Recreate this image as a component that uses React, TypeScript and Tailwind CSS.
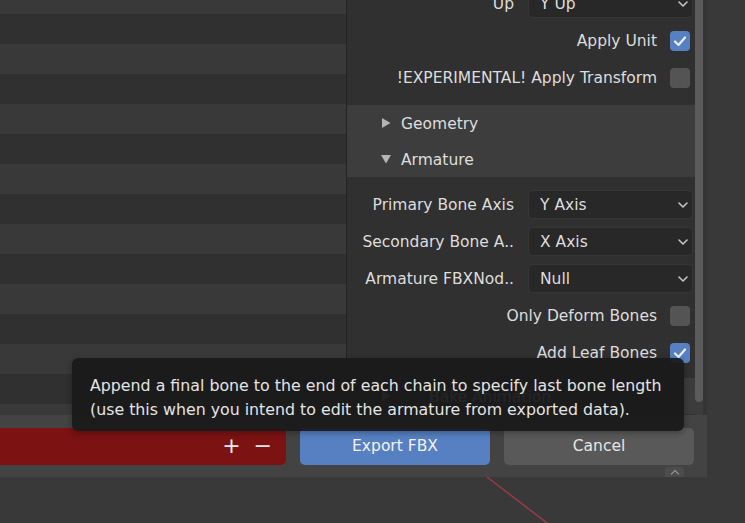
import React from "react";

const FONT = "font-['DejaVu_Sans','Noto_Sans',sans-serif]";

function Chevron() {
  return (
    <svg width="12" height="8" viewBox="0 0 12 8" className="shrink-0">
      <path d="M2 2 L6 6 L10 2" fill="none" stroke="#c4c4c4" strokeWidth="1.6" strokeLinecap="round" strokeLinejoin="round" />
    </svg>
  );
}

function Check({ on }: { on: boolean }) {
  return (
    <span
      className={
        "flex h-[20px] w-[20px] shrink-0 items-center justify-center rounded-[4px] " +
        (on ? "bg-[#5680c2]" : "bg-[#545454]")
      }
    >
      {on && (
        <svg width="16" height="16" viewBox="0 0 16 16">
          <path d="M3 8.5 L6.5 12 L13 4.5" fill="none" stroke="#e8eefa" strokeWidth="2.2" strokeLinecap="round" strokeLinejoin="round" />
        </svg>
      )}
    </span>
  );
}

function SelectRow({ label, value }: { label: string; value: string }) {
  return (
    <div className="flex h-[37px] items-center">
      <span className="w-[167px] shrink-0 truncate pt-[3px] text-right">{label}</span>
      <div className="ml-[14px] flex h-[29px] w-[165px] items-center justify-between rounded-[5px] border border-[#363636] bg-[#282828] pl-[11px] pr-[3px]">
        <span className="pt-[2px]">{value}</span>
        <Chevron />
      </div>
    </div>
  );
}

function CheckRow({ label, on }: { label: string; on: boolean }) {
  return (
    <div className="flex h-[37px] items-center justify-end pr-[5px]">
      <span className="mr-[13px] pt-[3px]">{label}</span>
      <Check on={on} />
    </div>
  );
}

function Header({ label, open, inset }: { label: string; open: boolean; inset?: boolean }) {
  return (
    <div className="flex h-[36px] items-center pl-[34px]">
      <svg width="10" height="10" viewBox="0 0 10 10" className="shrink-0">
        {open ? <path d="M0 1 L10 1 L5 9.5 Z" fill="#b4b4b4" /> : <path d="M1 0 L9.5 5 L1 10 Z" fill="#b4b4b4" />}
      </svg>
      <span className={(inset ? "ml-[38px]" : "ml-[10px]") + " pt-[4px]"}>{label}</span>
    </div>
  );
}

export default function App() {
  const stripes = Array.from({ length: 15 }, (_, i) => i);

  return (
    <div className={"relative h-[523px] w-[745px] overflow-hidden bg-[#393939] text-[15.5px] text-[#dddddd] " + FONT}>
      <svg className="absolute left-0 top-0" width="745" height="523">
        <line x1="487" y1="477" x2="551" y2="526" stroke="#9a3a4a" strokeWidth="1.5" />
      </svg>

      <div className="relative flex h-[477px] w-[707px] flex-col bg-[#434343]">
        <div className="flex h-[415px]">
          {/* file list */}
          <div className="w-[346px] overflow-hidden">
            <div className="-mt-[16px]">
              {stripes.map((i) => (
                <div key={i} className={"h-[30px] " + (i % 2 === 0 ? "bg-[#393939]" : "bg-[#303030]")} />
              ))}
            </div>
          </div>
          <div className="w-px bg-[#232323]" />

          {/* properties */}
          <div className="flex flex-1 overflow-hidden bg-[#303030]">
            <div className="w-[348px] shrink-0">
              <div className="-mt-[15px]">
                <SelectRow label="Up" value="Y Up" />
                <CheckRow label="Apply Unit" on />
                <CheckRow label="!EXPERIMENTAL! Apply Transform" on={false} />
                <div className="mt-[9px] bg-[#3d3d3d]">
                  <Header label="Geometry" open={false} />
                  <Header label="Armature" open />
                </div>
                <div className="pb-[7px] pt-[9px]">
                  <SelectRow label="Primary Bone Axis" value="Y Axis" />
                  <SelectRow label="Secondary Bone A.." value="X Axis" />
                  <SelectRow label="Armature FBXNod.." value="Null" />
                  <CheckRow label="Only Deform Bones" on={false} />
                  <CheckRow label="Add Leaf Bones" on />
                </div>
                <div className="bg-[#3c3c3c]">
                  <Header label="Bake Animation" open={false} inset />
                </div>
              </div>
            </div>
            <div className="w-[8px] shrink-0 bg-[#3c3c3c]">
              <div className="h-[402px] w-[8px] rounded-b-[4px] bg-[#5b5b5b]" />
            </div>
            <div className="flex-1 bg-[#353535]" />
          </div>
        </div>

        {/* bottom bar */}
        <div className="flex h-[62px] items-center pr-[13px]">
          <div className="flex h-[37px] w-[286px] items-center justify-end gap-[13px] rounded-r-[5px] bg-[#7c1212] pr-[14px] text-[22px] leading-none text-[#ececec]">
            <span>+</span>
            <span>−</span>
          </div>
          <button className="ml-[14px] flex h-[37px] w-[190px] items-center justify-center rounded-[5px] bg-[#5680c2] pt-[2px] text-[#f2f2f2]">
            Export FBX
          </button>
          <button className="ml-[14px] flex h-[37px] w-[190px] items-center justify-center rounded-[5px] bg-[#595959] pt-[2px] text-[#e6e6e6]">
            Cancel
          </button>
        </div>

        <div className="absolute bottom-0 left-[665px] flex h-[10px] w-[19px] items-center justify-center rounded-t-[3px] bg-[#4c4c4c]">
          <svg width="10" height="6" viewBox="0 0 10 6">
            <path d="M1.5 5 L5 1.5 L8.5 5" fill="none" stroke="#8c8c8c" strokeWidth="1.4" strokeLinecap="round" />
          </svg>
        </div>
      </div>

      {/* tooltip */}
      <div className="absolute left-[72px] top-[358px] w-[612px] rounded-[6px] bg-[#19191b]/[0.94] px-[18px] pb-[9px] pt-[16px] text-[15.8px] leading-[24px] text-[#e4e4e4] shadow-[0_2px_6px_rgba(0,0,0,0.3)]">
        <p>Append a final bone to the end of each chain to specify last bone length</p>
        <p>(use this when you intend to edit the armature from exported data).</p>
      </div>
    </div>
  );
}
